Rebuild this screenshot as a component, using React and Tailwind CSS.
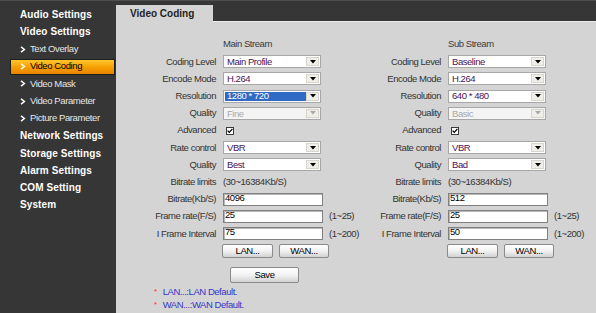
import React from 'react';

const FONT = "font-['Liberation_Sans',Arial,sans-serif]";

const menu = [
  { type: 'head', label: 'Audio Settings' },
  { type: 'head', label: 'Video Settings' },
  { type: 'sub', label: 'Text Overlay' },
  { type: 'sub', label: 'Video Coding', active: true },
  { type: 'sub', label: 'Video Mask' },
  { type: 'sub', label: 'Video Parameter' },
  { type: 'sub', label: 'Picture Parameter' },
  { type: 'head', label: 'Network Settings' },
  { type: 'head', label: 'Storage Settings' },
  { type: 'head', label: 'Alarm Settings' },
  { type: 'head', label: 'COM Setting' },
  { type: 'head', label: 'System' },
];

const Chevron = ({ color = '#ffffff' }) => (
  <svg width="6" height="7" viewBox="0 0 6 7" className="shrink-0">
    <polyline points="1,0.8 4.4,3.5 1,6.2" fill="none" stroke={color} strokeWidth="1.5" />
  </svg>
);

const Sidebar = () => (
  <aside className="w-[116px] shrink-0 pt-[5px]">
    {menu.map((item) => {
      if (item.type === 'head') {
        return (
          <div key={item.label} className="h-[17.3px] flex items-center pl-[20px] text-[10px] font-bold text-white tracking-[0.1px]">
            {item.label}
          </div>
        );
      }
      if (item.active) {
        return (
          <div key={item.label} className="h-[17.3px] flex items-center">
            <div className="ml-[10px] w-[105px] h-[16px] flex items-center gap-[4px] pl-[9px] bg-gradient-to-b from-[#ffc72a] via-[#f7a000] to-[#e88400] border border-[#1e1e1e] text-[9.5px] tracking-[-0.4px] text-black">
              <Chevron />
              <span>{item.label}</span>
            </div>
          </div>
        );
      }
      return (
        <div key={item.label} className="h-[17.3px] flex items-center gap-[4px] pl-[20px] text-[9.5px] tracking-[-0.4px] text-[#e6e6e6]">
          <Chevron />
          <span>{item.label}</span>
        </div>
      );
    })}
  </aside>
);

const Arrow = ({ disabled }) => (
  <div className="w-[13px] h-full shrink-0 flex items-center justify-center bg-[#efeee8] border border-[#d8d6cc]">
    <svg width="6" height="4" viewBox="0 0 6 4">
      <polygon points="0,0 6,0 3,3.5" fill={disabled ? '#a8a8a8' : '#000000'} />
    </svg>
  </div>
);

const Select = ({ value, selected, disabled }) => (
  <div className={`w-[98px] h-[13px] flex items-stretch border border-[#a7a7a7] p-[1px] ${disabled ? 'bg-[#f4f4f4]' : 'bg-white'}`}>
    <div
      className={`flex-1 flex items-center pl-[2px] leading-none ${
        selected ? 'bg-[#316ac5] text-white' : disabled ? 'text-[#a8a8a8]' : 'text-[#4a1458]'
      }`}
    >
      {value}
    </div>
    <Arrow disabled={disabled} />
  </div>
);

const TextBox = ({ value }) => (
  <div className="w-[100px] h-[13px] bg-white border border-[#808080] shadow-[inset_1px_1px_0_#b8b8b8] pl-[1px] leading-[8px] text-black">
    {value}
  </div>
);

const Checkbox = () => (
  <div className="ml-[3px] w-[8px] h-[8px] bg-white border border-[#3c3c3c] flex items-center justify-center">
    <svg width="6" height="6" viewBox="0 0 6 6">
      <polyline points="0.6,2.6 2.3,4.4 5.4,0.8" fill="none" stroke="#000" strokeWidth="1.3" />
    </svg>
  </div>
);

const Btn = ({ children, w = 'w-[51px]', h = 'h-[14px]' }) => (
  <button className={`${w} ${h} rounded-[2px] border border-[#8a8a8a] bg-gradient-to-b from-[#ffffff] via-[#f2f2f2] to-[#d2d2d2] text-[9.5px] tracking-[-0.4px] text-black leading-none`}>
    {children}
  </button>
);

const Row = ({ label, children, hint }) => (
  <div className="h-[17.2px] flex items-center">
    <div className="w-[87px] pr-[7px] text-right whitespace-nowrap">{label}</div>
    <div className="w-[100px] flex items-center">{children}</div>
    {hint && <div className="pl-[6px] whitespace-nowrap">{hint}</div>}
  </div>
);

const Stream = ({ s }) => (
  <div className="w-[225px]">
    <Row label="">
      <span className="text-[#3a3a3a]">{s.title}</span>
    </Row>
    <Row label="Coding Level"><Select value={s.level} /></Row>
    <Row label="Encode Mode"><Select value="H.264" /></Row>
    <Row label="Resolution"><Select value={s.res} selected={s.resSel} /></Row>
    <Row label="Quality"><Select value={s.q1} disabled /></Row>
    <Row label="Advanced"><Checkbox /></Row>
    <Row label="Rate control"><Select value="VBR" /></Row>
    <Row label="Quality"><Select value={s.q2} /></Row>
    <Row label="Bitrate limits"><span className="whitespace-nowrap">(30~16384Kb/S)</span></Row>
    <Row label="Bitrate(Kb/S)"><TextBox value={s.bitrate} /></Row>
    <Row label="Frame rate(F/S)" hint="(1~25)"><TextBox value="25" /></Row>
    <Row label="I Frame Interval" hint="(1~200)"><TextBox value={s.iframe} /></Row>
    <div className="h-[17.2px] flex items-center">
      <div className="w-[87px]" />
      <div className="flex gap-[6px] -ml-[1px]">
        <Btn>LAN...</Btn>
        <Btn w="w-[50px]">WAN...</Btn>
      </div>
    </div>
  </div>
);

const streams = [
  { title: 'Main Stream', level: 'Main Profile', res: '1280 * 720', resSel: true, q1: 'Fine', q2: 'Best', bitrate: '4096', iframe: '75' },
  { title: 'Sub Stream', level: 'Baseline', res: '640 * 480', resSel: false, q1: 'Basic', q2: 'Bad', bitrate: '512', iframe: '50' },
];

export default function App() {
  return (
    <div className={`${FONT} w-[596px] h-[313px] overflow-hidden flex bg-[#363636] border-t border-[#4e4e4a]`}>
      <Sidebar />
      <main className="flex-1 flex flex-col">
        <div className="h-[21px] flex items-end">
          <div className="w-[97px] h-[17px] bg-[#d4d4d4] pl-[14px] pt-[4px] text-[10px] font-bold text-[#222] leading-none">
            Video Coding
          </div>
          <div className="flex-1 h-full border-b border-[#ececec]" />
        </div>
        <div className="flex-1 bg-[#d4d4d4] text-[9.5px] tracking-[-0.45px] text-[#333] pt-[14px] pl-[20px]">
          <div className="flex">
            {streams.map((s) => (
              <Stream key={s.title} s={s} />
            ))}
          </div>
          <div className="h-[26px] flex items-center pl-[94px] pt-[5px]">
            <Btn w="w-[69px]" h="h-[16px]">Save</Btn>
          </div>
          <div className="pl-[18px] text-[#3434c8] leading-[13px]">
            <div className="flex items-center gap-[6px]">
              <span className="text-[#ff3030] text-[8px]">*</span>
              <span>LAN...:LAN Default.</span>
            </div>
            <div className="flex items-center gap-[6px]">
              <span className="text-[#ff3030] text-[8px]">*</span>
              <span>WAN...:WAN Default.</span>
            </div>
          </div>
        </div>
      </main>
    </div>
  );
}
